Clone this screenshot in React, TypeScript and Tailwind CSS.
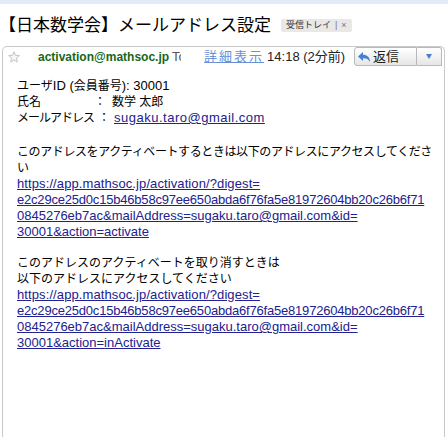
import React from "react";

const hash = "e2c29ce25d0c15b46b58c97ee650abda6f76fa5e81972604bb20c26b6f71";

function Star() {
  return (
    <svg width="12" height="12" viewBox="0 0 12 12" className="shrink-0">
      <polygon
        points="6,0.8 7.5,4.3 11.3,4.6 8.4,7.1 9.3,10.9 6,8.9 2.7,10.9 3.6,7.1 0.7,4.6 4.5,4.3"
        fill="#f6f6f6"
        stroke="#bdbdbd"
        strokeWidth="0.9"
        strokeLinejoin="round"
      />
    </svg>
  );
}

function ReplyArrow() {
  return (
    <svg width="12" height="10" viewBox="0 0 12 10" className="shrink-0">
      <path d="M0 4.5 L5 0 L5 2.8 C9 2.8 12 5 12 10 C10.5 7.2 8.4 6.3 5 6.3 L5 9 Z" fill="#4a7fcf" />
    </svg>
  );
}

function Link({ children, className = "" }: { children: React.ReactNode; className?: string }) {
  return <a className={`text-[13px] text-[#21218f] underline underline-offset-[1px] ${className}`}>{children}</a>;
}

function UrlBlock({ action }: { action: string }) {
  return (
    <>
      <div className="whitespace-nowrap">
        <Link className="tracking-[0.1px]">https://app.mathsoc.jp/activation/?digest=</Link>
      </div>
      <div className="whitespace-nowrap">
        <Link className="tracking-[-0.2px]">{hash}</Link>
      </div>
      <div className="whitespace-nowrap">
        <Link>0845276eb7ac&amp;mailAddress=sugaku.taro@gmail.com&amp;id=</Link>
      </div>
      <div className="whitespace-nowrap">
        <Link>30001&amp;action={action}</Link>
      </div>
    </>
  );
}

export default function App() {
  return (
    <div className="w-[448px] h-[437px] overflow-hidden bg-white text-black [font-family:'Liberation_Sans','Noto_Sans_CJK_JP',sans-serif]">
      <div className="h-[4px] bg-[#e3eaf8]" />

      {/* subject */}
      <div className="flex h-[42px] items-center pl-[2px]">
        <h1 className="-ml-[3px] text-[17px] leading-none font-normal whitespace-nowrap">【日本数学会】メールアドレス設定</h1>
        <span className="ml-[10px] flex h-[13px] items-center gap-[4px] rounded-[2px] bg-[#e8e8e8] px-[5px] text-[9px] leading-none text-[#333] whitespace-nowrap">
          受信トレイ
          <span className="text-[#777]">|</span>
          <span className="text-[#777]">×</span>
        </span>
      </div>

      {/* message */}
      <div className="ml-[2px] h-[391px] w-[443px] rounded-t-[5px] border border-b-0 border-[#c9c9c9]">
        <div className="flex h-[19px] items-center whitespace-nowrap">
          <div className="ml-[5px]">
            <Star />
          </div>
          <span className="ml-[18px] text-[12px] font-bold text-[#17661b]">activation@mathsoc.jp</span>
          <span className="ml-[3px] w-[9px] overflow-hidden text-[13px] text-[#555]">To</span>
          <a className="ml-[23px] text-[13px] tracking-[2px] text-[#6b8fd8] underline">詳細表示</a>
          <span className="ml-[3px] text-[13px] text-[#222]">14:18 (2分前)</span>

          <div className="ml-auto mr-[2px] flex h-full">
            <div className="flex w-[63px] items-center gap-[3px] rounded-l-[3px] border border-[#b9b9b9] bg-gradient-to-b from-white to-[#e6e6e6] pl-[3px] text-[13px] text-[#222]">
              <ReplyArrow />
              <span>返信</span>
            </div>
            <div className="flex w-[25px] items-center justify-center rounded-tr-[3px] border border-l-0 border-[#b9b9b9] bg-gradient-to-b from-white to-[#e6e6e6]">
              <span className="block h-0 w-0 border-x-[3px] border-t-[5px] border-x-transparent border-t-[#4a7fcf]" />
            </div>
          </div>
        </div>

        <div className="pl-[14px] pt-[12px] text-[12px] leading-[16px]">
          <div>
            <div className="whitespace-nowrap">
              ユーザ<span className="text-[13px]">ID (</span>会員番号<span className="text-[13px]">): 30001</span>
            </div>
            <div className="flex whitespace-nowrap">
              <span className="w-[77px]">氏名</span>
              <span>：</span>
              <span className="ml-[6px]">数学 太郎</span>
            </div>
            <div className="flex whitespace-nowrap">
              <span className="w-[81px] tracking-[-1px]">メールアドレス</span>
              <span>：</span>
              <Link className="ml-[4px] tracking-[0.5px]">sugaku.taro@gmail.com</Link>
            </div>
          </div>

          <div className="mt-[18px]">
            <div className="whitespace-nowrap tracking-[-0.4px]">このアドレスをアクティベートするときは以下のアドレスにアクセスしてくださ</div>
            <div>い</div>
            <UrlBlock action="activate" />
          </div>

          <div className="mt-[15px]">
            <div className="whitespace-nowrap">このアドレスのアクティベートを取り消すときは</div>
            <div className="whitespace-nowrap">以下のアドレスにアクセスしてください</div>
            <UrlBlock action="inActivate" />
          </div>
        </div>
      </div>
    </div>
  );
}
